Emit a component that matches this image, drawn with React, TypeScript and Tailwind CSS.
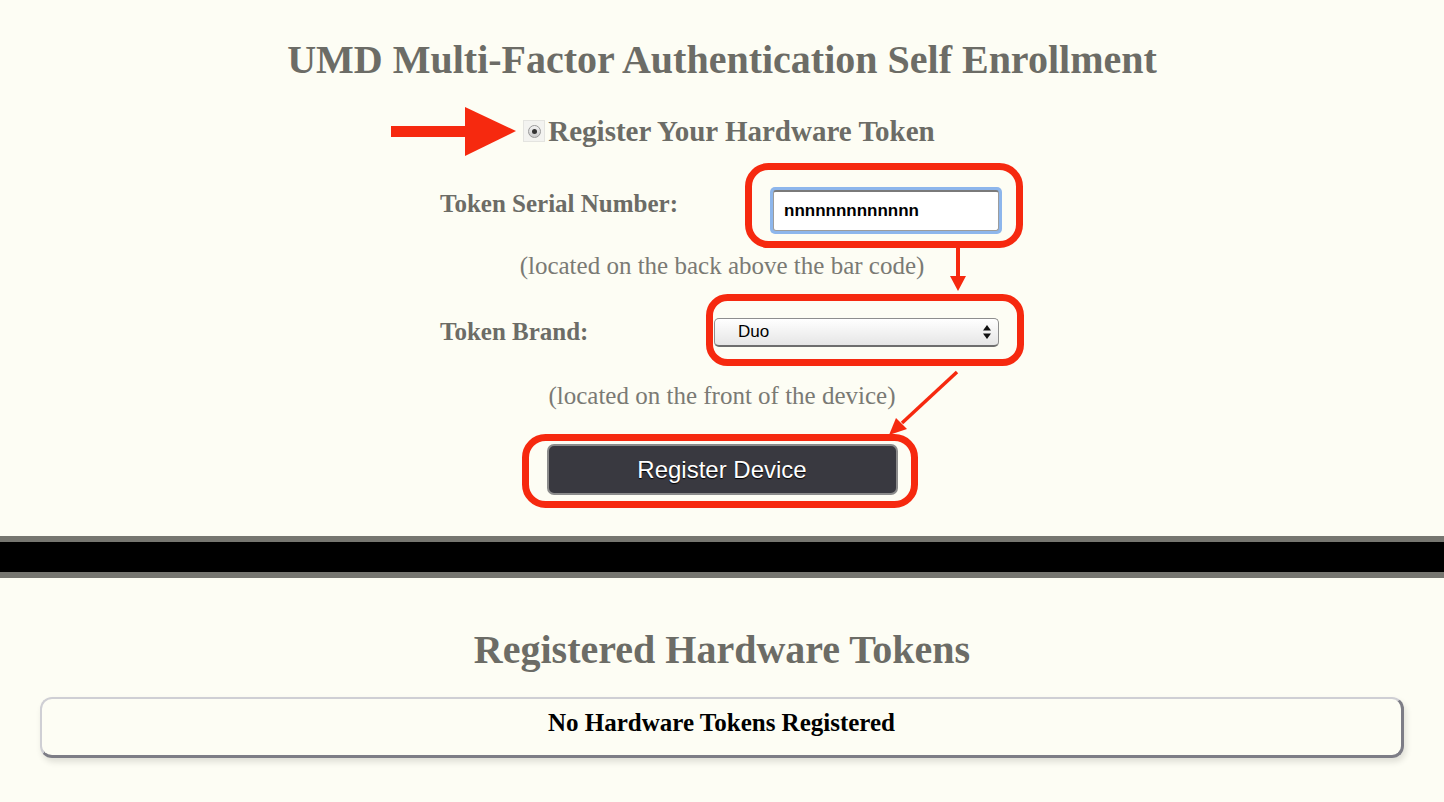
import React from "react";

const serif = { fontFamily: '"Liberation Serif", "Times New Roman", serif' };
const sans = { fontFamily: '"Liberation Sans", Arial, sans-serif' };

function Overlay() {
  const red = "#f6290f";
  return (
    <svg
      className="absolute left-0 top-0 pointer-events-none"
      width={1444}
      height={802}
      viewBox="0 0 1444 802"
    >
      {/* big arrow */}
      <rect x={391} y={126} width={80} height={11} fill={red} />
      <polygon points="465,107 516,131 465,156" fill={red} />
      {/* serial box */}
      <rect x={748.5} y={166.5} width={271} height={78} rx={20} fill="none" stroke={red} strokeWidth={7} />
      {/* down arrow */}
      <line x1={958} y1={248} x2={958} y2={278} stroke={red} strokeWidth={4} />
      <polygon points="950,276 966,276 958,291" fill={red} />
      {/* brand box */}
      <rect x={709.5} y={297.5} width={311} height={65} rx={18} fill="none" stroke={red} strokeWidth={7} />
      {/* diagonal arrow */}
      <line x1={957} y1={372} x2={902} y2={423} stroke={red} strokeWidth={3.5} />
      <polygon points="889,435 896,418 907,429" fill={red} />
      {/* button box */}
      <rect x={525.5} y={437.5} width={389} height={67} rx={20} fill="none" stroke={red} strokeWidth={7} />
    </svg>
  );
}

export default function App() {
  return (
    <div className="relative w-full min-h-[802px] bg-[#fdfdf4] overflow-hidden" style={serif}>
      <div className="flex flex-col items-center">
        <div className="h-[120px] flex items-center">
          <h1 className="text-[40px] leading-[46px] font-bold text-[#6c6c66]">
            UMD Multi-Factor Authentication Self Enrollment
          </h1>
        </div>

        <div className="h-[22px] ml-[14px] flex items-center">
          <div className="w-[22px] h-[22px] mr-[3px] flex items-center justify-center border border-[#e4e4e0] bg-[#f3f3f0]">
            <div className="w-[13px] h-[13px] rounded-full border border-[#9a9a9a] bg-gradient-to-b from-[#f4f4f4] to-[#c9c9c9] flex items-center justify-center">
              <div className="w-[5px] h-[5px] rounded-full bg-[#333]" />
            </div>
          </div>
          <span className="text-[29px] leading-[30px] font-bold text-[#6c6c66]">
            Register Your Hardware Token
          </span>
        </div>

        {/* serial row */}
        <div className="mt-[45px] w-[564px] flex items-start h-[48px]">
          <div className="w-[330px] pt-[2px] text-[25px] leading-[30px] font-bold text-[#6c6c66] whitespace-nowrap">
            Token Serial Number:
          </div>
          <div className="rounded-[5px] p-[3px] bg-[#8db6ec]">
            <div className="w-[226px] h-[41px] bg-white border border-[#9c9c9c] border-t-[#7a7a7a] border-t-2 rounded-[3px] flex items-center pl-[10px]">
              <span className="text-[17px] font-bold text-black" style={sans}>
                nnnnnnnnnnnnn
              </span>
            </div>
          </div>
        </div>

        <div className="mt-[18px] h-[26px] flex items-center text-[25px] leading-[30px] text-[#7a7a74] whitespace-nowrap">
          (located on the back above the bar code)
        </div>

        {/* brand row */}
        <div className="mt-[38px] w-[564px] flex items-center h-[30px]">
          <div className="w-[274px] text-[25px] leading-[30px] font-bold text-[#6c6c66]">Token Brand:</div>
          <div
            className="w-[285px] h-[29px] rounded-[5px] border border-[#8e8e8e] border-b-[#6e6e6e] border-b-2 bg-gradient-to-b from-white to-[#e6e6e6] flex items-center pl-[23px] pr-[7px] shadow-[inset_0_1px_0_#fff]"
            style={sans}
          >
            <span className="flex-1 text-[17px] text-black">Duo</span>
            <svg width="8" height="14" viewBox="0 0 8 14">
              <polygon points="4,0 8,5.5 0,5.5" fill="#111" />
              <polygon points="0,8.5 8,8.5 4,14" fill="#111" />
            </svg>
          </div>
        </div>

        <div className="mt-[36px] h-[26px] flex items-center text-[25px] leading-[30px] text-[#7a7a74] whitespace-nowrap">
          (located on the front of the device)
        </div>

        <button
          className="mt-[35px] w-[351px] h-[51px] rounded-[7px] border-2 border-[#8b8b8b] bg-[#393940] text-white text-[24px] [text-shadow:0_1px_1px_#000]"
          style={sans}
        >
          Register Device
        </button>
      </div>

      {/* divider */}
      <div className="mt-[41px] w-full">
        <div className="h-[6px] bg-[#767670]" />
        <div className="h-[30px] bg-black" />
        <div className="h-[6px] bg-[#767670]" />
      </div>

      <div className="flex flex-col items-center">
        <h2 className="mt-[50px] h-[44px] text-[40px] leading-[44px] font-bold text-[#6c6c66]">
          Registered Hardware Tokens
        </h2>
      </div>

      <div className="mx-[40px] mt-[25px] h-[61px] rounded-[12px] border-2 border-[#cfcfd4] border-b-[3px] border-r-[3px] border-b-[#7d7d86] border-r-[#7d7d86] shadow-[2px_4px_6px_rgba(0,0,0,0.12)] flex items-start justify-center pt-[9px]">
        <span className="text-[25px] leading-[30px] font-bold text-black">No Hardware Tokens Registered</span>
      </div>

      <Overlay />
    </div>
  );
}
